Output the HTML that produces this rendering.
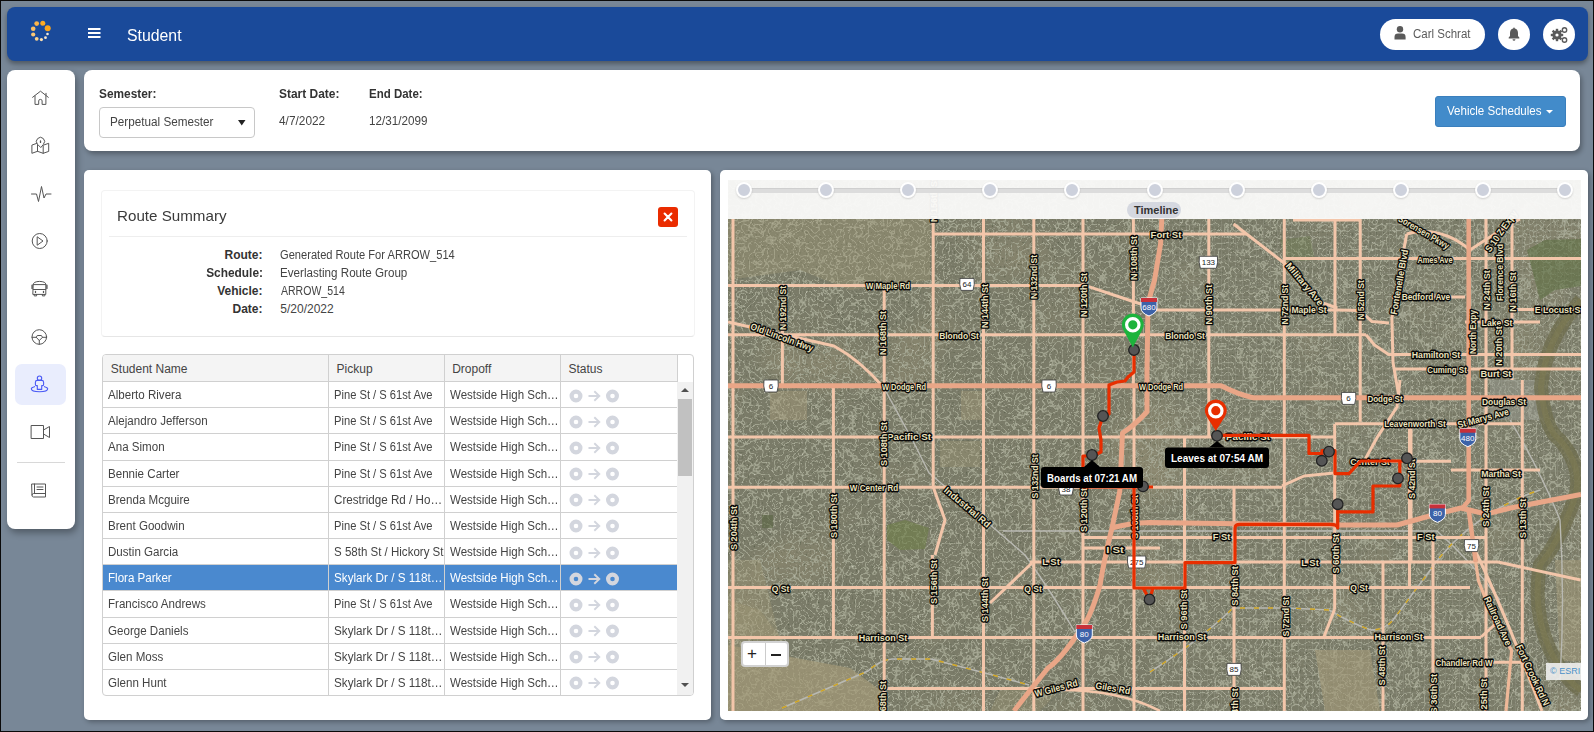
<!DOCTYPE html>
<html><head><meta charset="utf-8">
<style>
*{box-sizing:border-box;margin:0;padding:0}
html,body{width:1594px;height:732px;overflow:hidden;background:#0a0a0a;font-family:"Liberation Sans",sans-serif}
.abs{position:absolute}
.t{position:absolute;white-space:nowrap;line-height:1}
#bg{position:absolute;left:1px;top:1px;width:1592px;height:730px;background:#788797}
.card{position:absolute;background:#fff}
.pill{position:absolute;background:#fff;border-radius:16px}
</style></head><body>
<div id="bg"></div>

<div class="card" style="left:7px;top:7px;width:1581px;height:54px;background:#1a4a9a;border-radius:8px;box-shadow:0 3px 5px rgba(0,0,0,.35)"></div>
<svg class="abs" style="left:0;top:0" width="60" height="50">
 <circle cx="42.8" cy="23.2" r="2.5" fill="#fdaa22"/><circle cx="36.7" cy="23.6" r="2.4" fill="#fdb54a"/>
 <circle cx="47.7" cy="28.3" r="3" fill="#fba41a"/><circle cx="33.2" cy="28.7" r="2.3" fill="#fdc064"/>
 <circle cx="33.2" cy="34.5" r="2.1" fill="#fdc877"/><circle cx="36.7" cy="38.8" r="1.9" fill="#fdd38f"/>
 <circle cx="41.4" cy="39.6" r="1.6" fill="#fde0b0"/><circle cx="45.5" cy="37.7" r="1.4" fill="#f8e6c8"/>
 <circle cx="47.5" cy="34" r="1.3" fill="#f3ead8"/></svg>
<svg class="abs" style="left:88px;top:28px" width="13" height="11"><rect x="0" y="0" width="12.5" height="2" fill="#fff"/><rect x="0" y="4" width="12.5" height="2" fill="#fff"/><rect x="0" y="8" width="12.5" height="2" fill="#fff"/></svg>

<div class="t" style="top:28.0px;font-size:16px;font-weight:normal;color:#fff;left:127.4px;transform-origin:left center;transform:scaleX(0.989);">Student</div>
<div class="pill" style="left:1380px;top:19px;width:105px;height:31px"></div>
<svg class="abs" style="left:1394px;top:26px" width="13" height="14"><circle cx="6" cy="3.3" r="3.2" fill="#5a5a5a"/><path d="M0.5 13.5 V11 Q0.5 7.6 4 7.6 H8 Q11.6 7.6 11.6 11 V13.5 Z" fill="#5a5a5a"/></svg>
<div class="t" style="top:28.1px;font-size:12px;font-weight:normal;color:#5a5a5a;left:1413.3px;transform-origin:left center;transform:scaleX(0.958);">Carl Schrat</div>
<div class="pill" style="left:1498px;top:19px;width:32px;height:31px"></div>
<svg class="abs" style="left:1506px;top:26px" width="16" height="16"><path d="M8 1.5 Q8.8 1.5 8.8 2.4 Q12 3.2 12 7 V10 L13.3 11.6 V12.4 H2.7 V11.6 L4 10 V7 Q4 3.2 7.2 2.4 Q7.2 1.5 8 1.5Z" fill="#5a5a5a"/><path d="M6.5 13.2 H9.5 Q9.3 14.8 8 14.8 Q6.7 14.8 6.5 13.2Z" fill="#5a5a5a"/></svg>
<div class="pill" style="left:1543px;top:19px;width:32px;height:31px"></div>
<svg class="abs" style="left:1549px;top:25px" width="20" height="20">
 <g fill="#5a5a5a"><circle cx="8" cy="10" r="4.6"/>
 <rect x="6.8" y="3.8" width="2.4" height="12.4"/><rect x="1.8" y="8.8" width="12.4" height="2.4"/>
 <rect x="6.8" y="3.8" width="2.4" height="12.4" transform="rotate(45 8 10)"/><rect x="6.8" y="3.8" width="2.4" height="12.4" transform="rotate(-45 8 10)"/></g>
 <circle cx="8" cy="10" r="1.6" fill="#fff"/>
 <circle cx="15.5" cy="5" r="2.2" fill="none" stroke="#5a5a5a" stroke-width="1.4"/>
 <circle cx="15.5" cy="15" r="2.2" fill="none" stroke="#5a5a5a" stroke-width="1.4"/>
</svg>
<div class="card" style="left:7px;top:70px;width:68px;height:459px;border-radius:8px;box-shadow:2px 4px 7px rgba(0,0,0,.32)"></div>
<div class="abs" style="left:15px;top:364px;width:51px;height:41px;background:#e9edfd;border-radius:7px"></div>
<div class="abs" style="left:17px;top:462px;width:48px;height:1px;background:#d8d8d8"></div>
<svg class="abs" style="left:0;top:80px" width="80" height="430" fill="none" stroke="#555" stroke-width="1" stroke-linejoin="round" stroke-linecap="round">
 <!-- home center y 98 -> local 18 -->
 <path d="M32.6 17.3 L40.5 11.2 L48.3 17.3 M35 16 V24.4 H38.7 V20.9 Q38.7 19.4 40.4 19.4 Q42.1 19.4 42.1 20.9 V24.4 H45.9 V16 M46 13.3 V15.3"/>
 <!-- map y146 local 66 -->
 <path d="M36.6 63.4 L31.9 65.1 V73.3 L37.5 71.3 L43.2 73.3 L48.7 71.4 V63.3 L44.4 64.8 M37.5 63.6 V71.3 M43.2 65.2 V73.3"/>
 <path d="M40.5 67.3 L37.4 64.2 A4.1 4.1 0 1 1 43.6 64.2 Z" fill="#fff"/>
 <path d="M40.5 61 V62.4" stroke-width="1.3"/>
 <!-- pulse y194 local 114 -->
 <path d="M31.5 114 H36.5 L38.5 121.5 L41.5 106.5 L44 118 L46 114 H51"/>
 <!-- play y241 local 161 -->
 <circle cx="39.7" cy="161" r="7.5"/>
 <path d="M37.5 157 L43 161 L37.5 165 Z"/>
 <!-- bus y289 local 209 -->
 <path d="M33.2 204.4 Q33.2 201.6 39.5 201.4 Q45.8 201.6 45.8 204.4 V214.4 H33.2 Z M33.2 204.6 H45.8 M33.2 209.5 H45.8 M34.2 214.4 V215.9 H36.6 V214.4 M42.4 214.4 V215.9 H44.8 V214.4"/>
 <path d="M32.1 205.3 V208.4 M46.9 205.3 V208.4" stroke-width="1.4"/>
 <path d="M35.5 211.4 V212.4 M43.5 211.4 V212.4" stroke-width="1.3"/>
 <!-- steering y337 local 257 -->
 <circle cx="39.3" cy="257" r="7.3"/>
 <path d="M32 257.3 H36.2 L37.3 255.5 H41.4 L42.5 257.3 H46.6 M36.2 257.3 L39.3 260.5 L42.5 257.3 M39.3 260.5 V264.3"/>
 <!-- video y432 local 352 -->
 <path d="M31.5 345.5 H43.5 V358.5 H31.5 Z M43.5 350 L49.5 346.5 V357.5 L43.5 354"/>
 <!-- book y491 local 411 -->
 <path d="M32 404 H45.5 V417 H33.5 Q32 417 32 415.5 Z M32 415 Q32 413.5 33.5 413.5 H45.5 M34.5 404 V413.5 M37 407 H43 M37 409.5 H43"/>
</svg>
<svg class="abs" style="left:0;top:360px" width="80" height="50" fill="none" stroke="#4a5af5" stroke-width="1.1" stroke-linejoin="round">
 <circle cx="39.5" cy="18.2" r="2.2"/>
 <path d="M37.3 29.4 V25.6 H36.4 Q35.4 25.6 35.4 24.4 V22.2 Q35.4 20.4 37.4 20.4 H41.6 Q43.6 20.4 43.6 22.2 V24.4 Q43.6 25.6 42.6 25.6 H41.7 V29.4 Z"/>
 <path d="M35 26.5 Q31.3 27.6 31.3 28.8 Q31.3 31.8 39.5 31.8 Q47.7 31.8 47.7 28.8 Q47.7 27.6 44 26.5"/>
</svg>

<div class="card" style="left:84px;top:70px;width:1496px;height:81px;border-radius:8px;box-shadow:2px 3px 5px rgba(0,0,0,.3)"></div>
<div class="t" style="top:88.0px;font-size:12px;font-weight:bold;color:#333;left:98.5px;transform-origin:left center;transform:scaleX(0.989);">Semester:</div>
<div class="abs" style="left:99px;top:107px;width:156px;height:31px;border:1px solid #c8c8c8;border-radius:4px"></div>
<div class="t" style="top:115.8px;font-size:12px;font-weight:normal;color:#444;left:110.3px;transform-origin:left center;transform:scaleX(0.976);">Perpetual Semester</div>
<svg class="abs" style="left:238px;top:120px" width="8" height="6"><path d="M0 0 H7.5 L3.75 5.5Z" fill="#222"/></svg>
<div class="t" style="top:87.8px;font-size:12px;font-weight:bold;color:#333;left:278.6px;transform-origin:left center;transform:scaleX(0.995);">Start Date:</div>
<div class="t" style="top:87.8px;font-size:12px;font-weight:bold;color:#333;left:368.6px;transform-origin:left center;transform:scaleX(0.957);">End Date:</div>
<div class="t" style="top:115.0px;font-size:12px;font-weight:normal;color:#444;left:279.3px;transform-origin:left center;transform:scaleX(0.989);">4/7/2022</div>
<div class="t" style="top:115.0px;font-size:12px;font-weight:normal;color:#444;left:368.6px;transform-origin:left center;transform:scaleX(0.973);">12/31/2099</div>
<div class="abs" style="left:1435px;top:96px;width:131px;height:31px;background:#428bca;border:1px solid #3a7fbd;border-radius:3px"></div>
<div class="t" style="top:104.7px;font-size:12px;font-weight:normal;color:#fff;left:1447.0px;transform-origin:left center;transform:scaleX(0.964);">Vehicle Schedules</div>
<svg class="abs" style="left:1546px;top:110px" width="8" height="5"><path d="M0 0 H7 L3.5 3.6Z" fill="#fff"/></svg>
<div class="card" style="left:84px;top:170px;width:627px;height:550px;border-radius:5px;box-shadow:2px 2px 5px rgba(0,0,0,.3)"></div>
<div class="abs" style="left:101px;top:190px;width:594px;height:147px;border:1px solid #f3f3f3;border-bottom-color:#e6e6e6;border-radius:4px"></div>
<div class="t" style="top:207.8px;font-size:15px;font-weight:normal;color:#3a3a3a;left:117.4px;transform-origin:left center;transform:scaleX(1.011);">Route Summary</div>
<div class="abs" style="left:658px;top:207px;width:20px;height:20px;background:#ea2c00;border-radius:3px"></div>
<svg class="abs" style="left:658px;top:207px" width="20" height="20"><path d="M6.6 6.6 L13.4 13.4 M13.4 6.6 L6.6 13.4" stroke="#fff" stroke-width="2.1" stroke-linecap="round"/></svg>
<div class="abs" style="left:109px;top:236px;width:578px;height:1px;background:#eee"></div>
<div class="t" style="top:249.1px;font-size:12px;font-weight:bold;color:#333;left:-37.5px;width:300px;text-align:right;transform-origin:right center;">Route:</div>
<div class="t" style="top:266.9px;font-size:12px;font-weight:bold;color:#333;left:-37.5px;width:300px;text-align:right;transform-origin:right center;transform:scaleX(0.991);">Schedule:</div>
<div class="t" style="top:284.8px;font-size:12px;font-weight:bold;color:#333;left:-37.5px;width:300px;text-align:right;transform-origin:right center;">Vehicle:</div>
<div class="t" style="top:302.8px;font-size:12px;font-weight:bold;color:#333;left:-37.5px;width:300px;text-align:right;transform-origin:right center;">Date:</div>
<div class="t" style="top:249.1px;font-size:12px;font-weight:normal;color:#444;left:280.4px;transform-origin:left center;transform:scaleX(0.926);">Generated Route For ARROW_514</div>
<div class="t" style="top:266.9px;font-size:12px;font-weight:normal;color:#444;left:280.3px;transform-origin:left center;transform:scaleX(0.969);">Everlasting Route Group</div>
<div class="t" style="top:284.8px;font-size:12px;font-weight:normal;color:#444;left:281.3px;transform-origin:left center;transform:scaleX(0.877);">ARROW_514</div>
<div class="t" style="top:302.8px;font-size:12px;font-weight:normal;color:#444;left:280.3px;transform-origin:left center;">5/20/2022</div>
<div class="abs" style="left:102px;top:354px;width:592px;height:342px;border:1px solid #d0d0d0;border-radius:4px;overflow:hidden;background:#fff">
<div class="abs" style="left:0;top:0;width:574px;height:27px;background:#f4f4f4;border-bottom:1px solid #d0d0d0"></div>
<div class="abs" style="left:574px;top:0;width:1px;height:27px;background:#d0d0d0"></div>
<div class="abs" style="left:0;top:52.17px;width:574px;height:1px;background:#d0d0d0"></div>
<div class="abs" style="left:0px;top:27.00px;width:225px;height:26.17px;overflow:hidden"><div class="t" style="left:5px;top:7px;font-size:12px;color:#444;transform:scaleX(0.965);transform-origin:left center">Alberto Rivera</div></div>
<div class="abs" style="left:226px;top:27.00px;width:115px;height:26.17px;overflow:hidden"><div class="t" style="left:5px;top:7px;font-size:12px;color:#444;transform:scaleX(0.93);transform-origin:left center">Pine St / S 61st Ave</div></div>
<div class="abs" style="left:342px;top:27.00px;width:115px;height:26.17px;overflow:hidden"><div class="t" style="left:5px;top:7px;font-size:12px;color:#444;transform:scaleX(0.96);transform-origin:left center">Westside High Sch…</div></div>
<svg class="abs" style="left:466px;top:33.50px" width="52" height="14"><circle cx="7" cy="7" r="4.4" fill="none" stroke="#d3d6de" stroke-width="4.2"/><path d="M19.5 7 H30 M25.3 2.2 L30.3 7 L25.3 11.8" fill="none" stroke="#d3d6de" stroke-width="1.9"/><circle cx="43.5" cy="7" r="4.4" fill="none" stroke="#d3d6de" stroke-width="4.2"/></svg>
<div class="abs" style="left:0;top:78.34px;width:574px;height:1px;background:#d0d0d0"></div>
<div class="abs" style="left:0px;top:53.17px;width:225px;height:26.17px;overflow:hidden"><div class="t" style="left:5px;top:7px;font-size:12px;color:#444;transform:scaleX(0.965);transform-origin:left center">Alejandro Jefferson</div></div>
<div class="abs" style="left:226px;top:53.17px;width:115px;height:26.17px;overflow:hidden"><div class="t" style="left:5px;top:7px;font-size:12px;color:#444;transform:scaleX(0.93);transform-origin:left center">Pine St / S 61st Ave</div></div>
<div class="abs" style="left:342px;top:53.17px;width:115px;height:26.17px;overflow:hidden"><div class="t" style="left:5px;top:7px;font-size:12px;color:#444;transform:scaleX(0.96);transform-origin:left center">Westside High Sch…</div></div>
<svg class="abs" style="left:466px;top:59.67px" width="52" height="14"><circle cx="7" cy="7" r="4.4" fill="none" stroke="#d3d6de" stroke-width="4.2"/><path d="M19.5 7 H30 M25.3 2.2 L30.3 7 L25.3 11.8" fill="none" stroke="#d3d6de" stroke-width="1.9"/><circle cx="43.5" cy="7" r="4.4" fill="none" stroke="#d3d6de" stroke-width="4.2"/></svg>
<div class="abs" style="left:0;top:104.51px;width:574px;height:1px;background:#d0d0d0"></div>
<div class="abs" style="left:0px;top:79.34px;width:225px;height:26.17px;overflow:hidden"><div class="t" style="left:5px;top:7px;font-size:12px;color:#444;transform:scaleX(0.965);transform-origin:left center">Ana Simon</div></div>
<div class="abs" style="left:226px;top:79.34px;width:115px;height:26.17px;overflow:hidden"><div class="t" style="left:5px;top:7px;font-size:12px;color:#444;transform:scaleX(0.93);transform-origin:left center">Pine St / S 61st Ave</div></div>
<div class="abs" style="left:342px;top:79.34px;width:115px;height:26.17px;overflow:hidden"><div class="t" style="left:5px;top:7px;font-size:12px;color:#444;transform:scaleX(0.96);transform-origin:left center">Westside High Sch…</div></div>
<svg class="abs" style="left:466px;top:85.84px" width="52" height="14"><circle cx="7" cy="7" r="4.4" fill="none" stroke="#d3d6de" stroke-width="4.2"/><path d="M19.5 7 H30 M25.3 2.2 L30.3 7 L25.3 11.8" fill="none" stroke="#d3d6de" stroke-width="1.9"/><circle cx="43.5" cy="7" r="4.4" fill="none" stroke="#d3d6de" stroke-width="4.2"/></svg>
<div class="abs" style="left:0;top:130.68px;width:574px;height:1px;background:#d0d0d0"></div>
<div class="abs" style="left:0px;top:105.51px;width:225px;height:26.17px;overflow:hidden"><div class="t" style="left:5px;top:7px;font-size:12px;color:#444;transform:scaleX(0.965);transform-origin:left center">Bennie Carter</div></div>
<div class="abs" style="left:226px;top:105.51px;width:115px;height:26.17px;overflow:hidden"><div class="t" style="left:5px;top:7px;font-size:12px;color:#444;transform:scaleX(0.93);transform-origin:left center">Pine St / S 61st Ave</div></div>
<div class="abs" style="left:342px;top:105.51px;width:115px;height:26.17px;overflow:hidden"><div class="t" style="left:5px;top:7px;font-size:12px;color:#444;transform:scaleX(0.96);transform-origin:left center">Westside High Sch…</div></div>
<svg class="abs" style="left:466px;top:112.01px" width="52" height="14"><circle cx="7" cy="7" r="4.4" fill="none" stroke="#d3d6de" stroke-width="4.2"/><path d="M19.5 7 H30 M25.3 2.2 L30.3 7 L25.3 11.8" fill="none" stroke="#d3d6de" stroke-width="1.9"/><circle cx="43.5" cy="7" r="4.4" fill="none" stroke="#d3d6de" stroke-width="4.2"/></svg>
<div class="abs" style="left:0;top:156.85px;width:574px;height:1px;background:#d0d0d0"></div>
<div class="abs" style="left:0px;top:131.68px;width:225px;height:26.17px;overflow:hidden"><div class="t" style="left:5px;top:7px;font-size:12px;color:#444;transform:scaleX(0.965);transform-origin:left center">Brenda Mcguire</div></div>
<div class="abs" style="left:226px;top:131.68px;width:115px;height:26.17px;overflow:hidden"><div class="t" style="left:5px;top:7px;font-size:12px;color:#444;transform:scaleX(0.97);transform-origin:left center">Crestridge Rd / Ho…</div></div>
<div class="abs" style="left:342px;top:131.68px;width:115px;height:26.17px;overflow:hidden"><div class="t" style="left:5px;top:7px;font-size:12px;color:#444;transform:scaleX(0.96);transform-origin:left center">Westside High Sch…</div></div>
<svg class="abs" style="left:466px;top:138.18px" width="52" height="14"><circle cx="7" cy="7" r="4.4" fill="none" stroke="#d3d6de" stroke-width="4.2"/><path d="M19.5 7 H30 M25.3 2.2 L30.3 7 L25.3 11.8" fill="none" stroke="#d3d6de" stroke-width="1.9"/><circle cx="43.5" cy="7" r="4.4" fill="none" stroke="#d3d6de" stroke-width="4.2"/></svg>
<div class="abs" style="left:0;top:183.02px;width:574px;height:1px;background:#d0d0d0"></div>
<div class="abs" style="left:0px;top:157.85px;width:225px;height:26.17px;overflow:hidden"><div class="t" style="left:5px;top:7px;font-size:12px;color:#444;transform:scaleX(0.965);transform-origin:left center">Brent Goodwin</div></div>
<div class="abs" style="left:226px;top:157.85px;width:115px;height:26.17px;overflow:hidden"><div class="t" style="left:5px;top:7px;font-size:12px;color:#444;transform:scaleX(0.93);transform-origin:left center">Pine St / S 61st Ave</div></div>
<div class="abs" style="left:342px;top:157.85px;width:115px;height:26.17px;overflow:hidden"><div class="t" style="left:5px;top:7px;font-size:12px;color:#444;transform:scaleX(0.96);transform-origin:left center">Westside High Sch…</div></div>
<svg class="abs" style="left:466px;top:164.35px" width="52" height="14"><circle cx="7" cy="7" r="4.4" fill="none" stroke="#d3d6de" stroke-width="4.2"/><path d="M19.5 7 H30 M25.3 2.2 L30.3 7 L25.3 11.8" fill="none" stroke="#d3d6de" stroke-width="1.9"/><circle cx="43.5" cy="7" r="4.4" fill="none" stroke="#d3d6de" stroke-width="4.2"/></svg>
<div class="abs" style="left:0;top:209.19px;width:574px;height:1px;background:#d0d0d0"></div>
<div class="abs" style="left:0px;top:184.02px;width:225px;height:26.17px;overflow:hidden"><div class="t" style="left:5px;top:7px;font-size:12px;color:#444;transform:scaleX(0.965);transform-origin:left center">Dustin Garcia</div></div>
<div class="abs" style="left:226px;top:184.02px;width:115px;height:26.17px;overflow:hidden"><div class="t" style="left:5px;top:7px;font-size:12px;color:#444;transform:scaleX(0.96);transform-origin:left center">S 58th St / Hickory St</div></div>
<div class="abs" style="left:342px;top:184.02px;width:115px;height:26.17px;overflow:hidden"><div class="t" style="left:5px;top:7px;font-size:12px;color:#444;transform:scaleX(0.96);transform-origin:left center">Westside High Sch…</div></div>
<svg class="abs" style="left:466px;top:190.52px" width="52" height="14"><circle cx="7" cy="7" r="4.4" fill="none" stroke="#d3d6de" stroke-width="4.2"/><path d="M19.5 7 H30 M25.3 2.2 L30.3 7 L25.3 11.8" fill="none" stroke="#d3d6de" stroke-width="1.9"/><circle cx="43.5" cy="7" r="4.4" fill="none" stroke="#d3d6de" stroke-width="4.2"/></svg>
<div class="abs" style="left:0;top:210.19px;width:574px;height:26.17px;background:#4a89cf"></div>
<div class="abs" style="left:0;top:235.36px;width:574px;height:1px;background:#d0d0d0"></div>
<div class="abs" style="left:0px;top:210.19px;width:225px;height:26.17px;overflow:hidden"><div class="t" style="left:5px;top:7px;font-size:12px;color:#fff;transform:scaleX(0.965);transform-origin:left center">Flora Parker</div></div>
<div class="abs" style="left:226px;top:210.19px;width:115px;height:26.17px;overflow:hidden"><div class="t" style="left:5px;top:7px;font-size:12px;color:#fff;transform:scaleX(0.975);transform-origin:left center">Skylark Dr / S 118t…</div></div>
<div class="abs" style="left:342px;top:210.19px;width:115px;height:26.17px;overflow:hidden"><div class="t" style="left:5px;top:7px;font-size:12px;color:#fff;transform:scaleX(0.96);transform-origin:left center">Westside High Sch…</div></div>
<svg class="abs" style="left:466px;top:216.69px" width="52" height="14"><circle cx="7" cy="7" r="4.4" fill="none" stroke="#d3d6de" stroke-width="4.2"/><path d="M19.5 7 H30 M25.3 2.2 L30.3 7 L25.3 11.8" fill="none" stroke="#d3d6de" stroke-width="1.9"/><circle cx="43.5" cy="7" r="4.4" fill="none" stroke="#d3d6de" stroke-width="4.2"/></svg>
<div class="abs" style="left:0;top:261.53px;width:574px;height:1px;background:#d0d0d0"></div>
<div class="abs" style="left:0px;top:236.36px;width:225px;height:26.17px;overflow:hidden"><div class="t" style="left:5px;top:7px;font-size:12px;color:#444;transform:scaleX(0.965);transform-origin:left center">Francisco Andrews</div></div>
<div class="abs" style="left:226px;top:236.36px;width:115px;height:26.17px;overflow:hidden"><div class="t" style="left:5px;top:7px;font-size:12px;color:#444;transform:scaleX(0.93);transform-origin:left center">Pine St / S 61st Ave</div></div>
<div class="abs" style="left:342px;top:236.36px;width:115px;height:26.17px;overflow:hidden"><div class="t" style="left:5px;top:7px;font-size:12px;color:#444;transform:scaleX(0.96);transform-origin:left center">Westside High Sch…</div></div>
<svg class="abs" style="left:466px;top:242.86px" width="52" height="14"><circle cx="7" cy="7" r="4.4" fill="none" stroke="#d3d6de" stroke-width="4.2"/><path d="M19.5 7 H30 M25.3 2.2 L30.3 7 L25.3 11.8" fill="none" stroke="#d3d6de" stroke-width="1.9"/><circle cx="43.5" cy="7" r="4.4" fill="none" stroke="#d3d6de" stroke-width="4.2"/></svg>
<div class="abs" style="left:0;top:287.70px;width:574px;height:1px;background:#d0d0d0"></div>
<div class="abs" style="left:0px;top:262.53px;width:225px;height:26.17px;overflow:hidden"><div class="t" style="left:5px;top:7px;font-size:12px;color:#444;transform:scaleX(0.965);transform-origin:left center">George Daniels</div></div>
<div class="abs" style="left:226px;top:262.53px;width:115px;height:26.17px;overflow:hidden"><div class="t" style="left:5px;top:7px;font-size:12px;color:#444;transform:scaleX(0.975);transform-origin:left center">Skylark Dr / S 118t…</div></div>
<div class="abs" style="left:342px;top:262.53px;width:115px;height:26.17px;overflow:hidden"><div class="t" style="left:5px;top:7px;font-size:12px;color:#444;transform:scaleX(0.96);transform-origin:left center">Westside High Sch…</div></div>
<svg class="abs" style="left:466px;top:269.03px" width="52" height="14"><circle cx="7" cy="7" r="4.4" fill="none" stroke="#d3d6de" stroke-width="4.2"/><path d="M19.5 7 H30 M25.3 2.2 L30.3 7 L25.3 11.8" fill="none" stroke="#d3d6de" stroke-width="1.9"/><circle cx="43.5" cy="7" r="4.4" fill="none" stroke="#d3d6de" stroke-width="4.2"/></svg>
<div class="abs" style="left:0;top:313.87px;width:574px;height:1px;background:#d0d0d0"></div>
<div class="abs" style="left:0px;top:288.70px;width:225px;height:26.17px;overflow:hidden"><div class="t" style="left:5px;top:7px;font-size:12px;color:#444;transform:scaleX(0.965);transform-origin:left center">Glen Moss</div></div>
<div class="abs" style="left:226px;top:288.70px;width:115px;height:26.17px;overflow:hidden"><div class="t" style="left:5px;top:7px;font-size:12px;color:#444;transform:scaleX(0.975);transform-origin:left center">Skylark Dr / S 118t…</div></div>
<div class="abs" style="left:342px;top:288.70px;width:115px;height:26.17px;overflow:hidden"><div class="t" style="left:5px;top:7px;font-size:12px;color:#444;transform:scaleX(0.96);transform-origin:left center">Westside High Sch…</div></div>
<svg class="abs" style="left:466px;top:295.20px" width="52" height="14"><circle cx="7" cy="7" r="4.4" fill="none" stroke="#d3d6de" stroke-width="4.2"/><path d="M19.5 7 H30 M25.3 2.2 L30.3 7 L25.3 11.8" fill="none" stroke="#d3d6de" stroke-width="1.9"/><circle cx="43.5" cy="7" r="4.4" fill="none" stroke="#d3d6de" stroke-width="4.2"/></svg>
<div class="abs" style="left:0;top:340.04px;width:574px;height:1px;background:#d0d0d0"></div>
<div class="abs" style="left:0px;top:314.87px;width:225px;height:26.17px;overflow:hidden"><div class="t" style="left:5px;top:7px;font-size:12px;color:#444;transform:scaleX(0.965);transform-origin:left center">Glenn Hunt</div></div>
<div class="abs" style="left:226px;top:314.87px;width:115px;height:26.17px;overflow:hidden"><div class="t" style="left:5px;top:7px;font-size:12px;color:#444;transform:scaleX(0.975);transform-origin:left center">Skylark Dr / S 118t…</div></div>
<div class="abs" style="left:342px;top:314.87px;width:115px;height:26.17px;overflow:hidden"><div class="t" style="left:5px;top:7px;font-size:12px;color:#444;transform:scaleX(0.96);transform-origin:left center">Westside High Sch…</div></div>
<svg class="abs" style="left:466px;top:321.37px" width="52" height="14"><circle cx="7" cy="7" r="4.4" fill="none" stroke="#d3d6de" stroke-width="4.2"/><path d="M19.5 7 H30 M25.3 2.2 L30.3 7 L25.3 11.8" fill="none" stroke="#d3d6de" stroke-width="1.9"/><circle cx="43.5" cy="7" r="4.4" fill="none" stroke="#d3d6de" stroke-width="4.2"/></svg>
<div class="abs" style="left:225px;top:0;width:1px;height:340px;background:#d0d0d0"></div>
<div class="abs" style="left:341px;top:0;width:1px;height:340px;background:#d0d0d0"></div>
<div class="abs" style="left:457px;top:0;width:1px;height:340px;background:#d0d0d0"></div>
<div class="t" style="left:7.8px;top:8px;font-size:12px;color:#444">Student Name</div>
<div class="t" style="left:233.6px;top:8px;font-size:12px;color:#444">Pickup</div>
<div class="t" style="left:349.2px;top:8px;font-size:12px;color:#444">Dropoff</div>
<div class="t" style="left:465.5px;top:8px;font-size:12px;color:#444">Status</div>
<div class="abs" style="left:574px;top:27px;width:17px;height:314px;background:#f1f1f1"></div>
<div class="abs" style="left:575px;top:44px;width:14px;height:77px;background:#c1c1c1"></div>
<svg class="abs" style="left:577px;top:32px" width="10" height="6"><path d="M1 5 H9 L5 1Z" fill="#505050"/></svg>
<svg class="abs" style="left:577px;top:327px" width="10" height="6"><path d="M1 1 H9 L5 5Z" fill="#505050"/></svg>
</div>
<div class="card" style="left:720px;top:170px;width:868px;height:550px;border-radius:5px;box-shadow:2px 2px 5px rgba(0,0,0,.3)"></div>
<svg class="abs" style="left:728px;top:180px" width="853" height="531" viewBox="728 180 853 531">
<defs><filter id="sat" x="0" y="0" width="100%" height="100%" color-interpolation-filters="sRGB"><feTurbulence type="turbulence" baseFrequency="0.16" numOctaves="1" seed="5" result="t"/><feColorMatrix in="t" type="matrix" values="0 0 0 0 .63  0 0 0 0 .64  0 0 0 0 .56  -12 0 0 0 1.25" result="streets"/><feTurbulence type="fractalNoise" baseFrequency="0.5" numOctaves="2" seed="3" result="n"/><feColorMatrix in="n" type="matrix" values="0 0 0 0 .3  0 0 0 0 .33  0 0 0 0 .25  -3 0 0 0 1.1" result="dark"/><feColorMatrix in="n" type="matrix" values="0 0 0 0 .9  0 0 0 0 .9  0 0 0 0 .85  3 0 0 0 -2.0" result="light"/><feTurbulence type="fractalNoise" baseFrequency="0.01" numOctaves="3" seed="11" result="big"/><feColorMatrix in="big" type="matrix" values="0 0 0 0 .56  0 0 0 0 .54  0 0 0 0 .44  2.0 0 0 0 -1.05" result="tan"/><feFlood flood-color="#7a7b68" result="base"/><feMerge><feMergeNode in="base"/><feMergeNode in="tan"/><feMergeNode in="streets"/><feMergeNode in="dark"/><feMergeNode in="light"/></feMerge></filter><pattern id="grid" width="7" height="6" patternUnits="userSpaceOnUse"><path d="M0 3 H7 M3.5 0 V6" stroke="#a9ac9c" stroke-width=".8" fill="none"/></pattern></defs>
<rect x="728" y="180" width="853" height="531" fill="#6f735f" filter="url(#sat)"/>
<path d="M1150 219 H1581 V711 H1150 Z" fill="url(#grid)" opacity=".28"/>
<path d="M728 219 L930 219 L930 280 L850 290 L800 270 L728 280Z" fill="#a49a78" opacity="0.35"/>
<path d="M770 391 L807 391 L807 420 L770 420Z" fill="#a49a78" opacity="0.45"/>
<path d="M961 391 L982 391 L982 420 L961 420Z" fill="#a49a78" opacity="0.4"/>
<path d="M940 441 L980 441 L980 467 L940 467Z" fill="#a49a78" opacity="0.35"/>
<path d="M728 645 L780 655 L850 668 L880 690 L880 711 L728 711Z" fill="#a49a78" opacity="0.7"/>
<path d="M728 600 L760 610 L790 650 L728 650Z" fill="#a49a78" opacity="0.35"/>
<path d="M728 560 L760 560 L780 640 L728 640Z" fill="#a49a78" opacity="0.3"/>
<path d="M1315 650 L1370 650 L1380 711 L1325 711Z" fill="#a49a78" opacity="0.6"/>
<path d="M1555 560 L1581 560 L1581 661 L1560 661Z" fill="#a49a78" opacity="0.5"/>
<path d="M1000 690 L1060 690 L1040 711 L990 711Z" fill="#a49a78" opacity="0.3"/>
<path d="M1490 380 L1545 380 L1545 420 L1490 420Z" fill="#9a9c92" opacity="0.45"/>
<path d="M887 525 L905 520 L929 528 L925 549 L900 550 L887 540Z" fill="#6e7e48" opacity="0.6"/>
<path d="M1527 250 L1545 240 L1581 239 L1581 286 L1555 290 L1540 300Z" fill="#5d7042" opacity="0.6"/>
<path d="M762 515 L773 515 L773 528 L762 528Z" fill="#55633e" opacity="0.55"/>
<path d="M1280 240 L1310 236 L1315 260 L1285 262Z" fill="#6a7a4a" opacity="0.35"/>
<path d="M1581 300 Q1545 340 1541 387 Q1545 430 1560 440 Q1585 470 1574 500 Q1560 540 1540 565 Q1532 610 1550 650 Q1565 680 1581 690" fill="none" stroke="#6d6c4c" stroke-width="14" opacity=".75"/>
<path d="M1581 300 Q1545 340 1541 387 Q1545 430 1560 440 Q1585 470 1574 500 Q1560 540 1540 565 Q1532 610 1550 650 Q1565 680 1581 690" fill="none" stroke="#7d7a52" stroke-width="6" opacity=".6"/>
<path d="M884 388 L913 441 L929 473 L948 489 L988 523 L1025 555 Q1050 590 1075 632" fill="none" stroke="#b9b9b2" stroke-width="1.4" stroke-linejoin="round" opacity="1"/>
<path d="M1003 531 H1437 Q1470 560 1500 600" fill="none" stroke="#b9b9b2" stroke-width="1.4" stroke-linejoin="round" opacity="1"/>
<path d="M782 708 L868 671 Q880 660 892 659 H931 L985 673 L1029 685" fill="none" stroke="#b9b9b2" stroke-width="1.6" stroke-linejoin="round" opacity="1"/>
<path d="M782 708 L868 671 Q880 660 892 659 H931 L985 673 L1029 685" fill="none" stroke="#d0a41c" stroke-width="1.4" stroke-dasharray="5 9"/>
<path d="M1150 672 Q1200 640 1233 608 H1288 L1329 610 Q1355 625 1371 630 Q1385 630 1393 620 L1440 557 Q1480 510 1540 490" fill="none" stroke="#b9b9b2" stroke-width="1.6" stroke-linejoin="round" opacity="1"/>
<path d="M1150 672 Q1200 640 1233 608 H1288 L1329 610 Q1355 625 1371 630 Q1385 630 1393 620 L1440 557 Q1480 510 1540 490" fill="none" stroke="#d0a41c" stroke-width="1.4" stroke-dasharray="5 9"/>
<path d="M1510 420 Q1540 470 1560 520 Q1565 600 1560 680" fill="none" stroke="#b9b9b2" stroke-width="1.4" stroke-linejoin="round" opacity="1"/>
<path d="M933 234 L1246 234" fill="none" stroke="#f3c6aa" stroke-width="3" stroke-linejoin="round" opacity="1"/>
<path d="M1293 220 L1360 220" fill="none" stroke="#f3c6aa" stroke-width="3" stroke-linejoin="round" opacity="1"/>
<path d="M1285 258.6 L1581 258.6" fill="none" stroke="#f3c6aa" stroke-width="3" stroke-linejoin="round" opacity="1"/>
<path d="M1392 297 L1465 297" fill="none" stroke="#f3c6aa" stroke-width="3" stroke-linejoin="round" opacity="1"/>
<path d="M1465 322 L1540 322" fill="none" stroke="#f3c6aa" stroke-width="3" stroke-linejoin="round" opacity="1"/>
<path d="M1512 309.5 L1581 309.5" fill="none" stroke="#f3c6aa" stroke-width="3" stroke-linejoin="round" opacity="1"/>
<path d="M728 334.8 L1366 334.8" fill="none" stroke="#f3c6aa" stroke-width="3" stroke-linejoin="round" opacity="1"/>
<path d="M1389 354.5 L1581 354.5" fill="none" stroke="#f3c6aa" stroke-width="3" stroke-linejoin="round" opacity="1"/>
<path d="M1394 369 L1581 369" fill="none" stroke="#f3c6aa" stroke-width="3" stroke-linejoin="round" opacity="1"/>
<path d="M728 437 L1334 437" fill="none" stroke="#f3c6aa" stroke-width="3" stroke-linejoin="round" opacity="1"/>
<path d="M1335 423.8 L1523 423.8" fill="none" stroke="#f3c6aa" stroke-width="3" stroke-linejoin="round" opacity="1"/>
<path d="M1360 461.2 L1451 461.2" fill="none" stroke="#f3c6aa" stroke-width="3" stroke-linejoin="round" opacity="1"/>
<path d="M1451 470 L1540 470" fill="none" stroke="#f3c6aa" stroke-width="3" stroke-linejoin="round" opacity="1"/>
<path d="M728 487.2 L1282 487.2" fill="none" stroke="#f3c6aa" stroke-width="3" stroke-linejoin="round" opacity="1"/>
<path d="M1083 537.4 L1486 537.4" fill="none" stroke="#f3c6aa" stroke-width="3" stroke-linejoin="round" opacity="1"/>
<path d="M1083 548 L1160 548" fill="none" stroke="#f3c6aa" stroke-width="3" stroke-linejoin="round" opacity="1"/>
<path d="M1030 562 L1498 562" fill="none" stroke="#f3c6aa" stroke-width="3" stroke-linejoin="round" opacity="1"/>
<path d="M728 587.5 L1470 587.5" fill="none" stroke="#f3c6aa" stroke-width="3" stroke-linejoin="round" opacity="1"/>
<path d="M728 637.4 L1481 637.4" fill="none" stroke="#f3c6aa" stroke-width="3" stroke-linejoin="round" opacity="1"/>
<path d="M1434 662.3 L1523 662.3" fill="none" stroke="#f3c6aa" stroke-width="3" stroke-linejoin="round" opacity="1"/>
<path d="M882 688.5 L1285 688.5" fill="none" stroke="#f3c6aa" stroke-width="3" stroke-linejoin="round" opacity="1"/>
<path d="M728 285.4 L1085 285.4 L1134.6 302 L1147 306" fill="none" stroke="#f3c6aa" stroke-width="3" stroke-linejoin="round" opacity="1"/>
<path d="M1147 310 L1337 310 L1360 310.5 L1372 321.6 L1389 323" fill="none" stroke="#f3c6aa" stroke-width="3" stroke-linejoin="round" opacity="1"/>
<path d="M1366 334.8 L1374.5 345 L1389.4 355" fill="none" stroke="#f3c6aa" stroke-width="3" stroke-linejoin="round" opacity="1"/>
<path d="M1282 485.8 L1304 476 L1334 473" fill="none" stroke="#f3c6aa" stroke-width="3" stroke-linejoin="round" opacity="1"/>
<path d="M1498 562 L1580.6 580" fill="none" stroke="#f3c6aa" stroke-width="3" stroke-linejoin="round" opacity="1"/>
<path d="M1481 637 L1500 620" fill="none" stroke="#f3c6aa" stroke-width="3" stroke-linejoin="round" opacity="1"/>
<path d="M733 219 L733 711" fill="none" stroke="#f3c6aa" stroke-width="3" stroke-linejoin="round" opacity="1"/>
<path d="M782.4 300 L782.4 386" fill="none" stroke="#f3c6aa" stroke-width="3" stroke-linejoin="round" opacity="1"/>
<path d="M833.4 386 L833.4 637.4" fill="none" stroke="#f3c6aa" stroke-width="3" stroke-linejoin="round" opacity="1"/>
<path d="M884.2 285 L884.2 711" fill="none" stroke="#f3c6aa" stroke-width="3" stroke-linejoin="round" opacity="1"/>
<path d="M933.2 219 L933.2 487" fill="none" stroke="#f3c6aa" stroke-width="3" stroke-linejoin="round" opacity="1"/>
<path d="M932.4 555 L932.4 637" fill="none" stroke="#f3c6aa" stroke-width="3" stroke-linejoin="round" opacity="1"/>
<path d="M983.5 219 L983.5 711" fill="none" stroke="#f3c6aa" stroke-width="3" stroke-linejoin="round" opacity="1"/>
<path d="M1033.8 219 L1033.8 711" fill="none" stroke="#f3c6aa" stroke-width="3" stroke-linejoin="round" opacity="1"/>
<path d="M1083 219 L1083 711" fill="none" stroke="#f3c6aa" stroke-width="3" stroke-linejoin="round" opacity="1"/>
<path d="M1133.4 219 L1133.4 386" fill="none" stroke="#f3c6aa" stroke-width="3" stroke-linejoin="round" opacity="1"/>
<path d="M1134 386 L1134 711" fill="none" stroke="#f3c6aa" stroke-width="3" stroke-linejoin="round" opacity="1"/>
<path d="M1184.5 436 L1184.5 711" fill="none" stroke="#f3c6aa" stroke-width="3" stroke-linejoin="round" opacity="1"/>
<path d="M1208.8 219 L1208.8 437" fill="none" stroke="#f3c6aa" stroke-width="3" stroke-linejoin="round" opacity="1"/>
<path d="M1234 487 L1234 711" fill="none" stroke="#f3c6aa" stroke-width="3" stroke-linejoin="round" opacity="1"/>
<path d="M1284.3 219 L1284.3 711" fill="none" stroke="#f3c6aa" stroke-width="3" stroke-linejoin="round" opacity="1"/>
<path d="M1335 219 L1335 334.8" fill="none" stroke="#f3c6aa" stroke-width="3" stroke-linejoin="round" opacity="1"/>
<path d="M1334.7 423.8 L1334.7 609" fill="none" stroke="#f3c6aa" stroke-width="3" stroke-linejoin="round" opacity="1"/>
<path d="M1360.2 219 L1360.2 421.8" fill="none" stroke="#f3c6aa" stroke-width="3" stroke-linejoin="round" opacity="1"/>
<path d="M1383 563 L1383 711" fill="none" stroke="#f3c6aa" stroke-width="3" stroke-linejoin="round" opacity="1"/>
<path d="M1409.5 428 L1409.5 587" fill="none" stroke="#f3c6aa" stroke-width="3" stroke-linejoin="round" opacity="1"/>
<path d="M1411 428 L1411 562" fill="none" stroke="#f3c6aa" stroke-width="3" stroke-linejoin="round" opacity="1"/>
<path d="M1433 537 L1433 711" fill="none" stroke="#f3c6aa" stroke-width="3" stroke-linejoin="round" opacity="1"/>
<path d="M1486 219 L1486 711" fill="none" stroke="#f3c6aa" stroke-width="3" stroke-linejoin="round" opacity="1"/>
<path d="M1522.3 380 L1522.3 711" fill="none" stroke="#f3c6aa" stroke-width="3" stroke-linejoin="round" opacity="1"/>
<path d="M1512 219 L1512 380" fill="none" stroke="#f3c6aa" stroke-width="3" stroke-linejoin="round" opacity="1"/>
<path d="M1334.7 609 L1324 636.6" fill="none" stroke="#f3c6aa" stroke-width="3" stroke-linejoin="round" opacity="1"/>
<path d="M933.2 487 L945 520 L935 555" fill="none" stroke="#f3c6aa" stroke-width="3" stroke-linejoin="round" opacity="1"/>
<path d="M990 603 L1032 563" fill="none" stroke="#f3c6aa" stroke-width="3" stroke-linejoin="round" opacity="1"/>
<path d="M1233.6 224 L1288 266 L1322.6 303 L1337.4 308" fill="none" stroke="#f3c6aa" stroke-width="3" stroke-linejoin="round" opacity="1"/>
<path d="M1406.7 234 L1404 248.7 L1391.9 318 L1393 362.5 L1399 397" fill="none" stroke="#f3c6aa" stroke-width="3" stroke-linejoin="round" opacity="1"/>
<path d="M1406.7 234 Q1440 225 1470 250" fill="none" stroke="#f3c6aa" stroke-width="3" stroke-linejoin="round" opacity="1"/>
<path d="M1400 380 L1397 407 L1377.7 436.6 L1365.4 458.7" fill="none" stroke="#f3c6aa" stroke-width="3" stroke-linejoin="round" opacity="1"/>
<path d="M728 322 L821 343 L834 346 Q860 360 884 388" fill="none" stroke="#f3c6aa" stroke-width="3" stroke-linejoin="round" opacity="1"/>
<path d="M1470 250 Q1500 230 1520 219" fill="none" stroke="#f3c6aa" stroke-width="3" stroke-linejoin="round" opacity="1"/>
<path d="M1475.7 562 L1478.5 581 L1495 622.8 L1511.6 650.4 L1506 711" fill="none" stroke="#eeb898" stroke-width="3.2" stroke-linejoin="round" opacity="1"/>
<path d="M1470 540 Q1500 600 1542 711" fill="none" stroke="#f3c6aa" stroke-width="3" stroke-linejoin="round" opacity="1"/>
<path d="M728 385.8 H1221 Q1238.5 394.6 1253 397.7 H1581" fill="none" stroke="#e9a687" stroke-width="5" stroke-linejoin="round" opacity="1"/>
<path d="M1161.8 219 L1160.6 243.7 L1154.4 280.8 L1148 303 L1147 372 V411.8 Q1135 425 1122.5 433 L1119.8 491 L1112 528 Q1105 555 1100 585 Q1090 620 1079 632 Q1060 660 1048 668 Q1030 690 1014 711" fill="none" stroke="#e9a687" stroke-width="5" stroke-linejoin="round" opacity="1"/>
<path d="M1112 528 Q1130 523 1150 522.6 L1333.5 525 H1397 L1436.8 514 L1461 508 L1486 514 L1510.5 508 L1581 494.4" fill="none" stroke="#e9a687" stroke-width="5" stroke-linejoin="round" opacity="1"/>
<path d="M1468.7 219 V500.5 L1461 510" fill="none" stroke="#e9a687" stroke-width="4.5" stroke-linejoin="round" opacity="1"/>
<path d="M1468.7 510 Q1472 535 1475.7 562" fill="none" stroke="#e9a687" stroke-width="4.5" stroke-linejoin="round" opacity="1"/>
<path d="M1160 711 Q1120 690 1060 690" fill="none" stroke="#f3c6aa" stroke-width="2.6" stroke-linejoin="round" opacity="1"/>
</svg>
<svg class="abs" style="left:728px;top:180px" width="853" height="531" viewBox="728 180 853 531">
<g font-family="Liberation Sans" font-size="9.5" font-weight="bold" text-anchor="middle" dominant-baseline="central" fill="#ece2bd" stroke="#080808" stroke-width="2.8" paint-order="stroke" stroke-linejoin="round">
<text x="888" y="285" textLength="44.0" lengthAdjust="spacingAndGlyphs">W Maple Rd</text>
<text x="782" y="308" transform="rotate(-90 782 308)" textLength="44.0" lengthAdjust="spacingAndGlyphs">N 192nd St</text>
<text x="882" y="333" transform="rotate(-90 882 333)" textLength="44.0" lengthAdjust="spacingAndGlyphs">N 168th St</text>
<text x="933" y="200" transform="rotate(-90 933 200)" textLength="44.0" lengthAdjust="spacingAndGlyphs">N 156th St</text>
<text x="984" y="306" transform="rotate(-90 984 306)" textLength="44.0" lengthAdjust="spacingAndGlyphs">N 144th St</text>
<text x="1033.5" y="277" transform="rotate(-90 1033.5 277)" textLength="44.0" lengthAdjust="spacingAndGlyphs">N 132nd St</text>
<text x="1083.5" y="295" transform="rotate(-90 1083.5 295)" textLength="44.0" lengthAdjust="spacingAndGlyphs">N 120th St</text>
<text x="1133" y="258" transform="rotate(-90 1133 258)" textLength="44.0" lengthAdjust="spacingAndGlyphs">N 108th St</text>
<text x="959" y="335" textLength="39.6" lengthAdjust="spacingAndGlyphs">Blondo St</text>
<text x="782" y="337" transform="rotate(20 782 337)" textLength="66.0" lengthAdjust="spacingAndGlyphs">Old Lincoln Hwy</text>
<text x="904" y="386.5" textLength="44.0" lengthAdjust="spacingAndGlyphs">W Dodge Rd</text>
<text x="1161" y="386" textLength="44.0" lengthAdjust="spacingAndGlyphs">W Dodge Rd</text>
<text x="1166" y="234" textLength="30.8" lengthAdjust="spacingAndGlyphs">Fort St</text>
<text x="1209" y="304.6" transform="rotate(-90 1209 304.6)" textLength="39.6" lengthAdjust="spacingAndGlyphs">N 90th St</text>
<text x="1305" y="284" transform="rotate(50 1305 284)" textLength="52.8" lengthAdjust="spacingAndGlyphs">Military Ave</text>
<text x="1285" y="304.6" transform="rotate(-90 1285 304.6)" textLength="39.6" lengthAdjust="spacingAndGlyphs">N 72nd St</text>
<text x="1309" y="309.5" textLength="35.2" lengthAdjust="spacingAndGlyphs">Maple St</text>
<text x="1360" y="300" transform="rotate(-90 1360 300)" textLength="39.6" lengthAdjust="spacingAndGlyphs">N 52nd St</text>
<text x="1399" y="282" transform="rotate(-80 1399 282)" textLength="66.0" lengthAdjust="spacingAndGlyphs">Fontenelle Blvd</text>
<text x="1435" y="259.7" textLength="35.2" lengthAdjust="spacingAndGlyphs">Ames Ave</text>
<text x="1426" y="296.6" textLength="48.4" lengthAdjust="spacingAndGlyphs">Bedford Ave</text>
<text x="1424" y="232" transform="rotate(30 1424 232)" textLength="57.2" lengthAdjust="spacingAndGlyphs">Sorensen Pkwy</text>
<text x="1486" y="290" transform="rotate(-90 1486 290)" textLength="39.6" lengthAdjust="spacingAndGlyphs">N 24th St</text>
<text x="1499" y="272.5" transform="rotate(-90 1499 272.5)" textLength="57.2" lengthAdjust="spacingAndGlyphs">Florence Blvd</text>
<text x="1512" y="292" transform="rotate(-90 1512 292)" textLength="39.6" lengthAdjust="spacingAndGlyphs">N 16th St</text>
<text x="1559" y="309.5" textLength="48.4" lengthAdjust="spacingAndGlyphs">E Locust St</text>
<text x="1497" y="322" textLength="30.8" lengthAdjust="spacingAndGlyphs">Lake St</text>
<text x="1472.6" y="332" transform="rotate(-90 1472.6 332)" textLength="44.0" lengthAdjust="spacingAndGlyphs">North Expy</text>
<text x="1498" y="346" transform="rotate(-90 1498 346)" textLength="39.6" lengthAdjust="spacingAndGlyphs">N 20th St</text>
<text x="1436" y="354.4" textLength="48.4" lengthAdjust="spacingAndGlyphs">Hamilton St</text>
<text x="1447" y="369.5" textLength="39.6" lengthAdjust="spacingAndGlyphs">Cuming St</text>
<text x="1496" y="373" textLength="30.8" lengthAdjust="spacingAndGlyphs">Burt St</text>
<text x="1185" y="335" textLength="39.6" lengthAdjust="spacingAndGlyphs">Blondo St</text>
<text x="1501" y="231" transform="rotate(-55 1501 231)" textLength="48.4" lengthAdjust="spacingAndGlyphs">S 10 Z Expy</text>
<text x="909" y="436.7" textLength="44.0" lengthAdjust="spacingAndGlyphs">Pacific St</text>
<text x="883" y="444" transform="rotate(-90 883 444)" textLength="44.0" lengthAdjust="spacingAndGlyphs">S 108th St</text>
<text x="874" y="487.2" textLength="48.4" lengthAdjust="spacingAndGlyphs">W Center Rd</text>
<text x="733" y="528" transform="rotate(-90 733 528)" textLength="44.0" lengthAdjust="spacingAndGlyphs">S 204th St</text>
<text x="833" y="516" transform="rotate(-90 833 516)" textLength="44.0" lengthAdjust="spacingAndGlyphs">S 180th St</text>
<text x="967.5" y="507" transform="rotate(40 967.5 507)" textLength="57.2" lengthAdjust="spacingAndGlyphs">Industrial Rd</text>
<text x="1034" y="476.5" transform="rotate(-90 1034 476.5)" textLength="44.0" lengthAdjust="spacingAndGlyphs">S 132nd St</text>
<text x="933" y="582" transform="rotate(-90 933 582)" textLength="44.0" lengthAdjust="spacingAndGlyphs">S 156th St</text>
<text x="984" y="600" transform="rotate(-90 984 600)" textLength="44.0" lengthAdjust="spacingAndGlyphs">S 144th St</text>
<text x="780.5" y="588.7" textLength="17.6" lengthAdjust="spacingAndGlyphs">Q St</text>
<text x="1033" y="588.7" textLength="17.6" lengthAdjust="spacingAndGlyphs">Q St</text>
<text x="1051" y="561.6" textLength="17.6" lengthAdjust="spacingAndGlyphs">L St</text>
<text x="883" y="637.8" textLength="48.4" lengthAdjust="spacingAndGlyphs">Harrison St</text>
<text x="1056" y="688" transform="rotate(-15 1056 688)" textLength="44.0" lengthAdjust="spacingAndGlyphs">W Giles Rd</text>
<text x="1113" y="688" transform="rotate(10 1113 688)" textLength="35.2" lengthAdjust="spacingAndGlyphs">Giles Rd</text>
<text x="1115" y="549" textLength="17.6" lengthAdjust="spacingAndGlyphs">I St</text>
<text x="1083" y="510" transform="rotate(-90 1083 510)" textLength="44.0" lengthAdjust="spacingAndGlyphs">S 120th St</text>
<text x="1385" y="398.4" textLength="35.2" lengthAdjust="spacingAndGlyphs">Dodge St</text>
<text x="1504" y="401.7" textLength="44.0" lengthAdjust="spacingAndGlyphs">Douglas St</text>
<text x="1415" y="423.6" textLength="61.6" lengthAdjust="spacingAndGlyphs">Leavenworth St</text>
<text x="1483" y="418" transform="rotate(-15 1483 418)" textLength="52.8" lengthAdjust="spacingAndGlyphs">St Marys Ave</text>
<text x="1501" y="473" textLength="39.6" lengthAdjust="spacingAndGlyphs">Martha St</text>
<text x="1411" y="479" transform="rotate(-90 1411 479)" textLength="39.6" lengthAdjust="spacingAndGlyphs">S 42nd St</text>
<text x="1485.5" y="507" transform="rotate(-90 1485.5 507)" textLength="39.6" lengthAdjust="spacingAndGlyphs">S 24th St</text>
<text x="1522.4" y="518.5" transform="rotate(-90 1522.4 518.5)" textLength="39.6" lengthAdjust="spacingAndGlyphs">S 13th St</text>
<text x="1221.5" y="536.3" textLength="17.6" lengthAdjust="spacingAndGlyphs">F St</text>
<text x="1425.7" y="536.3" textLength="17.6" lengthAdjust="spacingAndGlyphs">F St</text>
<text x="1310" y="562" textLength="17.6" lengthAdjust="spacingAndGlyphs">L St</text>
<text x="1336" y="553.6" transform="rotate(-90 1336 553.6)" textLength="39.6" lengthAdjust="spacingAndGlyphs">S 60th St</text>
<text x="1234" y="586" transform="rotate(-90 1234 586)" textLength="39.6" lengthAdjust="spacingAndGlyphs">S 84th St</text>
<text x="1183.6" y="609.6" transform="rotate(-90 1183.6 609.6)" textLength="39.6" lengthAdjust="spacingAndGlyphs">S 96th St</text>
<text x="1359" y="587.2" textLength="17.6" lengthAdjust="spacingAndGlyphs">Q St</text>
<text x="1285.5" y="616.6" transform="rotate(-90 1285.5 616.6)" textLength="39.6" lengthAdjust="spacingAndGlyphs">S 72nd St</text>
<text x="1182" y="636.7" textLength="48.4" lengthAdjust="spacingAndGlyphs">Harrison St</text>
<text x="1398.6" y="636.7" textLength="48.4" lengthAdjust="spacingAndGlyphs">Harrison St</text>
<text x="1498" y="621" transform="rotate(65 1498 621)" textLength="52.8" lengthAdjust="spacingAndGlyphs">Railroad Ave</text>
<text x="1533" y="675" transform="rotate(65 1533 675)" textLength="66.0" lengthAdjust="spacingAndGlyphs">Fort Crook Rd N</text>
<text x="1464" y="662" textLength="57.2" lengthAdjust="spacingAndGlyphs">Chandler Rd W</text>
<text x="1382" y="665.7" transform="rotate(-90 1382 665.7)" textLength="39.6" lengthAdjust="spacingAndGlyphs">S 48th St</text>
<text x="1433.6" y="693.7" transform="rotate(-90 1433.6 693.7)" textLength="39.6" lengthAdjust="spacingAndGlyphs">S 36th St</text>
<text x="1484" y="698.4" transform="rotate(-90 1484 698.4)" textLength="39.6" lengthAdjust="spacingAndGlyphs">S 25th St</text>
<text x="882" y="703" transform="rotate(-90 882 703)" textLength="44.0" lengthAdjust="spacingAndGlyphs">S 168th St</text>
<text x="1234" y="708" transform="rotate(-90 1234 708)" textLength="39.6" lengthAdjust="spacingAndGlyphs">S 84th St</text>
<text x="1248" y="436" textLength="44.0" lengthAdjust="spacingAndGlyphs">Pacific St</text>
<text x="1370" y="461" textLength="39.6" lengthAdjust="spacingAndGlyphs">Center St</text>
<text x="1134" y="517" transform="rotate(-90 1134 517)" textLength="44.0" lengthAdjust="spacingAndGlyphs">S 108th St</text>
</g>
<g><path d="M960.0 278.4 H974.0 Q975.0 284.4 973.0 290.4 H961.0 Q959.0 284.4 960.0 278.4Z" fill="#fff" stroke="#333" stroke-width=".8"/><text x="967" y="287.4" font-family="Liberation Sans" font-size="8" text-anchor="middle" fill="#222">64</text></g>
<g><path d="M764.0 380 H778.0 Q779.0 386 777.0 392 H765.0 Q763.0 386 764.0 380Z" fill="#fff" stroke="#333" stroke-width=".8"/><text x="771" y="389" font-family="Liberation Sans" font-size="8" text-anchor="middle" fill="#222">6</text></g>
<g><path d="M1042.0 380 H1056.0 Q1057.0 386 1055.0 392 H1043.0 Q1041.0 386 1042.0 380Z" fill="#fff" stroke="#333" stroke-width=".8"/><text x="1049" y="389" font-family="Liberation Sans" font-size="8" text-anchor="middle" fill="#222">6</text></g>
<g><path d="M1341.6 392.4 H1355.6 Q1356.6 398.4 1354.6 404.4 H1342.6 Q1340.6 398.4 1341.6 392.4Z" fill="#fff" stroke="#333" stroke-width=".8"/><text x="1348.6" y="401.4" font-family="Liberation Sans" font-size="8" text-anchor="middle" fill="#222">6</text></g>
<g><path d="M1199.4 256.3 H1217.4 Q1218.4 262.3 1216.4 268.3 H1200.4 Q1198.4 262.3 1199.4 256.3Z" fill="#fff" stroke="#333" stroke-width=".8"/><text x="1208.4" y="265.3" font-family="Liberation Sans" font-size="8" text-anchor="middle" fill="#222">133</text></g>
<g><path d="M1464.5 539.6 H1478.5 Q1479.5 545.6 1477.5 551.6 H1465.5 Q1463.5 545.6 1464.5 539.6Z" fill="#fff" stroke="#333" stroke-width=".8"/><text x="1471.5" y="548.6" font-family="Liberation Sans" font-size="8" text-anchor="middle" fill="#222">75</text></g>
<g><path d="M1227.0 663.4 H1241.0 Q1242.0 669.4 1240.0 675.4 H1228.0 Q1226.0 669.4 1227.0 663.4Z" fill="#fff" stroke="#333" stroke-width=".8"/><text x="1234" y="672.4" font-family="Liberation Sans" font-size="8" text-anchor="middle" fill="#222">85</text></g>
<g><path d="M1127.7 556 H1145.7 Q1146.7 562 1144.7 568 H1128.7 Q1126.7 562 1127.7 556Z" fill="#fff" stroke="#333" stroke-width=".8"/><text x="1136.7" y="565" font-family="Liberation Sans" font-size="8" text-anchor="middle" fill="#222">275</text></g>
<g><path d="M1059.0 483 H1073.0 Q1074.0 489 1072.0 495 H1060.0 Q1058.0 489 1059.0 483Z" fill="#fff" stroke="#333" stroke-width=".8"/><text x="1066" y="492" font-family="Liberation Sans" font-size="8" text-anchor="middle" fill="#222">38</text></g>
<g><path d="M1141 298 H1157 V308 Q1157 313 1149 316 Q1141 313 1141 308Z" fill="#3d62a8" stroke="#fff" stroke-width="1"/><rect x="1141" y="298" width="16" height="4" fill="#c8303a"/><text x="1149" y="310" font-family="Liberation Sans" font-size="8" text-anchor="middle" fill="#fff">680</text></g>
<g><path d="M1076.3 625 H1092.3 V635 Q1092.3 640 1084.3 643 Q1076.3 640 1076.3 635Z" fill="#3d62a8" stroke="#fff" stroke-width="1"/><rect x="1076.3" y="625" width="16" height="4" fill="#c8303a"/><text x="1084.3" y="637" font-family="Liberation Sans" font-size="8" text-anchor="middle" fill="#fff">80</text></g>
<g><path d="M1459.8 428.7 H1475.8 V438.7 Q1475.8 443.7 1467.8 446.7 Q1459.8 443.7 1459.8 438.7Z" fill="#3d62a8" stroke="#fff" stroke-width="1"/><rect x="1459.8" y="428.7" width="16" height="4" fill="#c8303a"/><text x="1467.8" y="440.7" font-family="Liberation Sans" font-size="8" text-anchor="middle" fill="#fff">480</text></g>
<g><path d="M1429.4 504.4 H1445.4 V514.4 Q1445.4 519.4 1437.4 522.4 Q1429.4 519.4 1429.4 514.4Z" fill="#3d62a8" stroke="#fff" stroke-width="1"/><rect x="1429.4" y="504.4" width="16" height="4" fill="#c8303a"/><text x="1437.4" y="516.4" font-family="Liberation Sans" font-size="8" text-anchor="middle" fill="#fff">80</text></g>
<path d="M1134 350 V372 L1128 377 L1125 381 L1117 382 L1109 385 V414 L1103 416 L1099 428 L1101 440 V452 L1092 456 H1083 V487 H1153" fill="none" stroke="#e82e00" stroke-width="3.2" stroke-linejoin="round"/>
<path d="M1134 487 V588 H1185 V562.6 H1235 V528 Q1235 524.3 1240 524.3 H1330 Q1337.7 524.3 1337.7 528 V511.9 H1373 V486 H1399.8 V461 H1412 M1337.7 511.9 V504 M1399.8 461 H1360.6 L1349 473.6 H1335 V450.7 H1322 V453.5 H1309 V435.4 H1217 M1143 588 L1149.5 599.5 L1153 588" fill="none" stroke="#e82e00" stroke-width="3.2" stroke-linejoin="round"/>
<circle cx="1134" cy="350" r="5.3" fill="#555" stroke="#222" stroke-width="1.3"/>
<circle cx="1103" cy="416" r="5.3" fill="#555" stroke="#222" stroke-width="1.3"/>
<circle cx="1092" cy="455" r="5.3" fill="#555" stroke="#222" stroke-width="1.3"/>
<circle cx="1143" cy="486.4" r="5.3" fill="#555" stroke="#222" stroke-width="1.3"/>
<circle cx="1149.5" cy="599.5" r="5.3" fill="#555" stroke="#222" stroke-width="1.3"/>
<circle cx="1217" cy="435.8" r="5.3" fill="#555" stroke="#222" stroke-width="1.3"/>
<circle cx="1329" cy="451.6" r="5.3" fill="#555" stroke="#222" stroke-width="1.3"/>
<circle cx="1321.8" cy="460.8" r="5.3" fill="#555" stroke="#222" stroke-width="1.3"/>
<circle cx="1407" cy="458.3" r="5.3" fill="#555" stroke="#222" stroke-width="1.3"/>
<circle cx="1398" cy="478.4" r="5.3" fill="#555" stroke="#222" stroke-width="1.3"/>
<circle cx="1337.7" cy="504.2" r="5.3" fill="#555" stroke="#222" stroke-width="1.3"/>
<path d="M1132.8 347.5 L1123.8 330.8 A11 11 0 1 1 1141.8 330.8 Z" fill="#1db33c"/>
<circle cx="1132.8" cy="324.8" r="6.2" fill="none" stroke="#fff" stroke-width="3.2"/>
<path d="M1215.8 431 L1206.8 416.7 A11 11 0 1 1 1224.8 416.7 Z" fill="#e82e00"/>
<circle cx="1215.8" cy="410.7" r="6.2" fill="none" stroke="#fff" stroke-width="3.2"/>
<path d="M1084 467 L1092 460 L1100 467Z" fill="#000"/>
<rect x="1041" y="467" width="102" height="21" rx="3" fill="#000"/>
<text x="1092.0" y="481.5" font-family="Liberation Sans" font-size="11" font-weight="bold" text-anchor="middle" fill="#fff" textLength="90" lengthAdjust="spacingAndGlyphs">Boards at 07:21 AM</text>
<path d="M1209 447.6 L1217 441 L1225 447.6Z" fill="#000"/>
<rect x="1165" y="447.6" width="104" height="20.399999999999977" rx="3" fill="#000"/>
<text x="1217.0" y="461.8" font-family="Liberation Sans" font-size="11" font-weight="bold" text-anchor="middle" fill="#fff" textLength="92" lengthAdjust="spacingAndGlyphs">Leaves at 07:54 AM</text>
</svg>
<div class="abs" style="left:728px;top:180px;width:853px;height:39px;background:rgba(250,250,249,.955)"></div>
<div class="abs" style="left:744px;top:188px;width:821px;height:5px;background:#dcdcdc;border-top:1px solid #cfcfcf"></div>
<div class="abs" style="left:736.0px;top:182px;width:16px;height:16px;border-radius:50%;background:#cdd1dc;border:2px solid #fff;box-shadow:0 1px 2px rgba(0,0,0,.15)"></div>
<div class="abs" style="left:818.1px;top:182px;width:16px;height:16px;border-radius:50%;background:#cdd1dc;border:2px solid #fff;box-shadow:0 1px 2px rgba(0,0,0,.15)"></div>
<div class="abs" style="left:900.2px;top:182px;width:16px;height:16px;border-radius:50%;background:#cdd1dc;border:2px solid #fff;box-shadow:0 1px 2px rgba(0,0,0,.15)"></div>
<div class="abs" style="left:982.3px;top:182px;width:16px;height:16px;border-radius:50%;background:#cdd1dc;border:2px solid #fff;box-shadow:0 1px 2px rgba(0,0,0,.15)"></div>
<div class="abs" style="left:1064.4px;top:182px;width:16px;height:16px;border-radius:50%;background:#cdd1dc;border:2px solid #fff;box-shadow:0 1px 2px rgba(0,0,0,.15)"></div>
<div class="abs" style="left:1146.5px;top:182px;width:16px;height:16px;border-radius:50%;background:#cdd1dc;border:2px solid #fff;box-shadow:0 1px 2px rgba(0,0,0,.15)"></div>
<div class="abs" style="left:1228.6px;top:182px;width:16px;height:16px;border-radius:50%;background:#cdd1dc;border:2px solid #fff;box-shadow:0 1px 2px rgba(0,0,0,.15)"></div>
<div class="abs" style="left:1310.7px;top:182px;width:16px;height:16px;border-radius:50%;background:#cdd1dc;border:2px solid #fff;box-shadow:0 1px 2px rgba(0,0,0,.15)"></div>
<div class="abs" style="left:1392.8px;top:182px;width:16px;height:16px;border-radius:50%;background:#cdd1dc;border:2px solid #fff;box-shadow:0 1px 2px rgba(0,0,0,.15)"></div>
<div class="abs" style="left:1474.9px;top:182px;width:16px;height:16px;border-radius:50%;background:#cdd1dc;border:2px solid #fff;box-shadow:0 1px 2px rgba(0,0,0,.15)"></div>
<div class="abs" style="left:1557.0px;top:182px;width:16px;height:16px;border-radius:50%;background:#cdd1dc;border:2px solid #fff;box-shadow:0 1px 2px rgba(0,0,0,.15)"></div>
<div class="abs" style="left:1127px;top:202px;width:54px;height:16px;border-radius:8px;background:#d5d8e0"></div>
<div class="t" style="left:1134px;top:205px;font-size:11px;font-weight:bold;color:#333">Timeline</div>
<div class="abs" style="left:741px;top:641px;width:48px;height:26px;background:#fff;border:2px solid #d2d2d2;border-radius:4px"></div>
<div class="abs" style="left:765px;top:643px;width:1px;height:22px;background:#ccc"></div>
<div class="t" style="left:747px;top:645px;font-size:17px;color:#222">+</div>
<div class="abs" style="left:771px;top:653.5px;width:10px;height:2px;background:#222"></div>
<div class="abs" style="left:1546px;top:663px;width:35px;height:17px;background:rgba(240,240,240,.9)"></div>
<div class="t" style="left:1550px;top:667px;font-size:9px;color:#4a90c8">© ESRI</div>
</body></html>
